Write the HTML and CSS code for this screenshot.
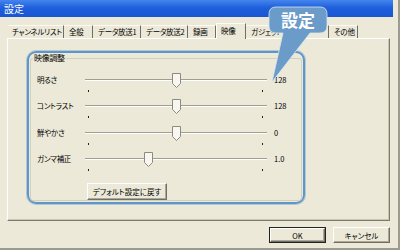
FILE: index.html
```html
<!DOCTYPE html>
<html lang="ja">
<head>
  <meta charset="UTF-8" />
  <title>設定</title>
  <link rel="stylesheet" href="styles.css">
</head>
<body>
  <div class="window">
    <div class="titlebar">設定</div>

    <div class="tabs">
      <span class="tab">チャンネルリスト</span>
      <span class="tab">全般</span>
      <span class="tab">データ放送1</span>
      <span class="tab">データ放送2</span>
      <span class="tab">録画</span>
      <span class="tab active">映像</span>
      <span class="tab">ガジェット</span>
      <span class="tab">その他</span>
    </div>

    <div class="panel">
      <div class="highlight">
        <fieldset class="group">
          <legend>映像調整</legend>

          <div class="row">
            <span class="label">明るさ</span>
            <div class="slider">
              <div class="track"></div>
              <div class="rail">
                <svg class="thumb" style="left: 50.2%" width="9" height="15" viewBox="0 0 9 15"><path d="M0.5 0.5H8.5V10.5L4.5 14.5L0.5 10.5Z" fill="#f7f6f1" stroke="#8d8b80"/></svg>
                <i class="tick start"></i><i class="tick end"></i>
              </div>
            </div>
            <span class="value">128</span>
          </div>

          <div class="row">
            <span class="label">コントラスト</span>
            <div class="slider">
              <div class="track"></div>
              <div class="rail">
                <svg class="thumb" style="left: 50.2%" width="9" height="15" viewBox="0 0 9 15"><path d="M0.5 0.5H8.5V10.5L4.5 14.5L0.5 10.5Z" fill="#f7f6f1" stroke="#8d8b80"/></svg>
                <i class="tick start"></i><i class="tick end"></i>
              </div>
            </div>
            <span class="value">128</span>
          </div>

          <div class="row">
            <span class="label">鮮やかさ</span>
            <div class="slider">
              <div class="track"></div>
              <div class="rail">
                <svg class="thumb" style="left: 50.2%" width="9" height="15" viewBox="0 0 9 15"><path d="M0.5 0.5H8.5V10.5L4.5 14.5L0.5 10.5Z" fill="#f7f6f1" stroke="#8d8b80"/></svg>
                <i class="tick start"></i><i class="tick end"></i>
              </div>
            </div>
            <span class="value">0</span>
          </div>

          <div class="row">
            <span class="label">ガンマ補正</span>
            <div class="slider">
              <div class="track"></div>
              <div class="rail">
                <svg class="thumb" style="left: 34%" width="9" height="15" viewBox="0 0 9 15"><path d="M0.5 0.5H8.5V10.5L4.5 14.5L0.5 10.5Z" fill="#f7f6f1" stroke="#8d8b80"/></svg>
                <i class="tick start"></i><i class="tick end"></i>
              </div>
            </div>
            <span class="value">1.0</span>
          </div>

          <button class="btn reset">デフォルト設定に戻す</button>
        </fieldset>
      </div>
    </div>

    <div class="footer">
      <button class="btn default">OK</button>
      <button class="btn">キャンセル</button>
    </div>

    <div class="callout">
      <svg width="62" height="78" viewBox="0 0 62 78">
        <path d="M8 1H52Q59 1 59 8V20Q59 27 52 27H42L4 76L15 27H8Q1 27 1 20V8Q1 1 8 1Z" fill="#6b9bc9" stroke="#dbe6f0" stroke-opacity="0.8"/>
      </svg>
      <span class="callout-text">設定</span>
    </div>
  </div>
</body>
</html>
```

FILE: styles.css
```css
body {
  margin: 0;
  font-family: "Noto Sans CJK JP", sans-serif;
  font-size: 7.5px;
  letter-spacing: -0.3px;
  font-feature-settings: "palt";
  color: #000;
  background: #ece9d8;
}

.window {
  position: relative;
  width: 400px;
  height: 250px;
  box-sizing: border-box;
  border-right: 2px solid #9d9b8f;
  border-bottom: 2px solid #9d9b8f;
  overflow: hidden;
}

.titlebar {
  height: 17px;
  margin-right: 5px;
  padding: 1px 0 0 4px;
  box-sizing: border-box;
  color: #fff;
  font-size: 10px;
  letter-spacing: 0;
  line-height: 16px;
  background: linear-gradient(#4485ee, #1f5fdc 45%, #1855d2);
}

/* tab strip */
.tabs {
  display: flex;
  align-items: flex-end;
  height: 14px;
  margin-top: 7px;
  padding-left: 8px;
  position: relative;
  z-index: 1;
}

.tab {
  height: 13px;
  padding-left: 5px;
  box-sizing: border-box;
  line-height: 12px;
  border-top: 1px solid #fbfaf6;
  border-right: 1px solid #6f6e66;
  background: #ece9d8;
  white-space: nowrap;
  overflow: hidden;
}

.tab:nth-child(1) { width: 56px; padding-left: 4px; }
.tab:nth-child(2) { width: 29px; }
.tab:nth-child(3) { width: 48px; }
.tab:nth-child(4) { width: 47px; }
.tab:nth-child(5) { width: 28px; }
.tab:nth-child(6) { width: 30px; }
.tab:nth-child(7) { width: 83px; }
.tab:nth-child(8) { width: 29px; }

.tab.active {
  height: 16px;
  margin-bottom: -1px;
  line-height: 13px;
  border-left: 1px solid #fff;
  padding-left: 4px;
}

.panel {
  height: 183px;
  margin: 0 8px 0 7px;
  padding: 12px 0 0 19px;
  box-sizing: border-box;
  border: 1px solid;
  border-color: #fff #7d7b70 #7d7b70 #fff;
  box-shadow: inset -1px -1px 0 #c9c6b6;
}

.highlight {
  display: flex;
  flex-direction: column;
  width: 278px;
  height: 153px;
  padding: 0 1px 1px;
  box-sizing: border-box;
  border: 2px solid #5e96cb;
  border-radius: 9px;
  box-shadow: 0 0 0 1px rgba(94, 150, 203, 0.4);
}

.group {
  flex: 1;
  margin: 0;
  padding: 4px 5px 0 6px;
  min-width: 0;
  border: 1px solid #d0d0bf;
  border-radius: 3px;
}

.group legend {
  margin-left: -4px;
  padding: 0 1px;
  font-size: 8px;
  line-height: 10px;
}

.row {
  display: flex;
  height: 26.3px;
  line-height: 26px;
}

.label {
  width: 48px;
  flex: none;
}

.slider {
  position: relative;
  width: 182px;
  flex: none;
}

.track {
  margin-top: 12px;
  height: 0;
  border-top: 1px solid #a09e92;
  border-bottom: 1px solid #fff;
}

.rail {
  position: absolute;
  left: 3px;
  right: 4px;
  top: 0;
  bottom: 0;
}

.thumb {
  position: absolute;
  top: 6px;
  margin-left: -4px;
}

.tick {
  position: absolute;
  top: 23px;
  width: 1px;
  height: 2px;
  background: #222;
}

.tick.start {
  left: 0;
}

.tick.end {
  right: 0;
}

.value {
  margin-left: 7px;
  letter-spacing: 0;
}

/* classic buttons */
.btn {
  font: inherit;
  font-feature-settings: "palt";
  color: #000;
  padding: 0;
  background: #ece9d8;
  border: 1px solid;
  border-color: #fff #716f64 #716f64 #fff;
  box-shadow: inset -1px -1px 0 #aca899;
}

.btn.reset {
  width: 80px;
  height: 17px;
  margin: 11px 0 0 50px;
}

.footer {
  display: flex;
  justify-content: flex-end;
  gap: 7px;
  padding: 6px 8px 0 0;
}

.footer .btn {
  width: 57px;
  height: 16px;
}

.btn.default {
  outline: 1px solid #222;
  outline-offset: -1px;
  border-width: 2px;
}

/* annotation bubble */
.callout {
  position: absolute;
  left: 268px;
  top: 6px;
  width: 62px;
  height: 78px;
  z-index: 2;
}

.callout svg {
  position: absolute;
  left: 0;
  top: 0;
}

.callout-text {
  position: relative;
  display: block;
  width: 60px;
  text-align: center;
  color: #fff;
  font-size: 17px;
  font-weight: bold;
  letter-spacing: 0;
  line-height: 28px;
}
```
